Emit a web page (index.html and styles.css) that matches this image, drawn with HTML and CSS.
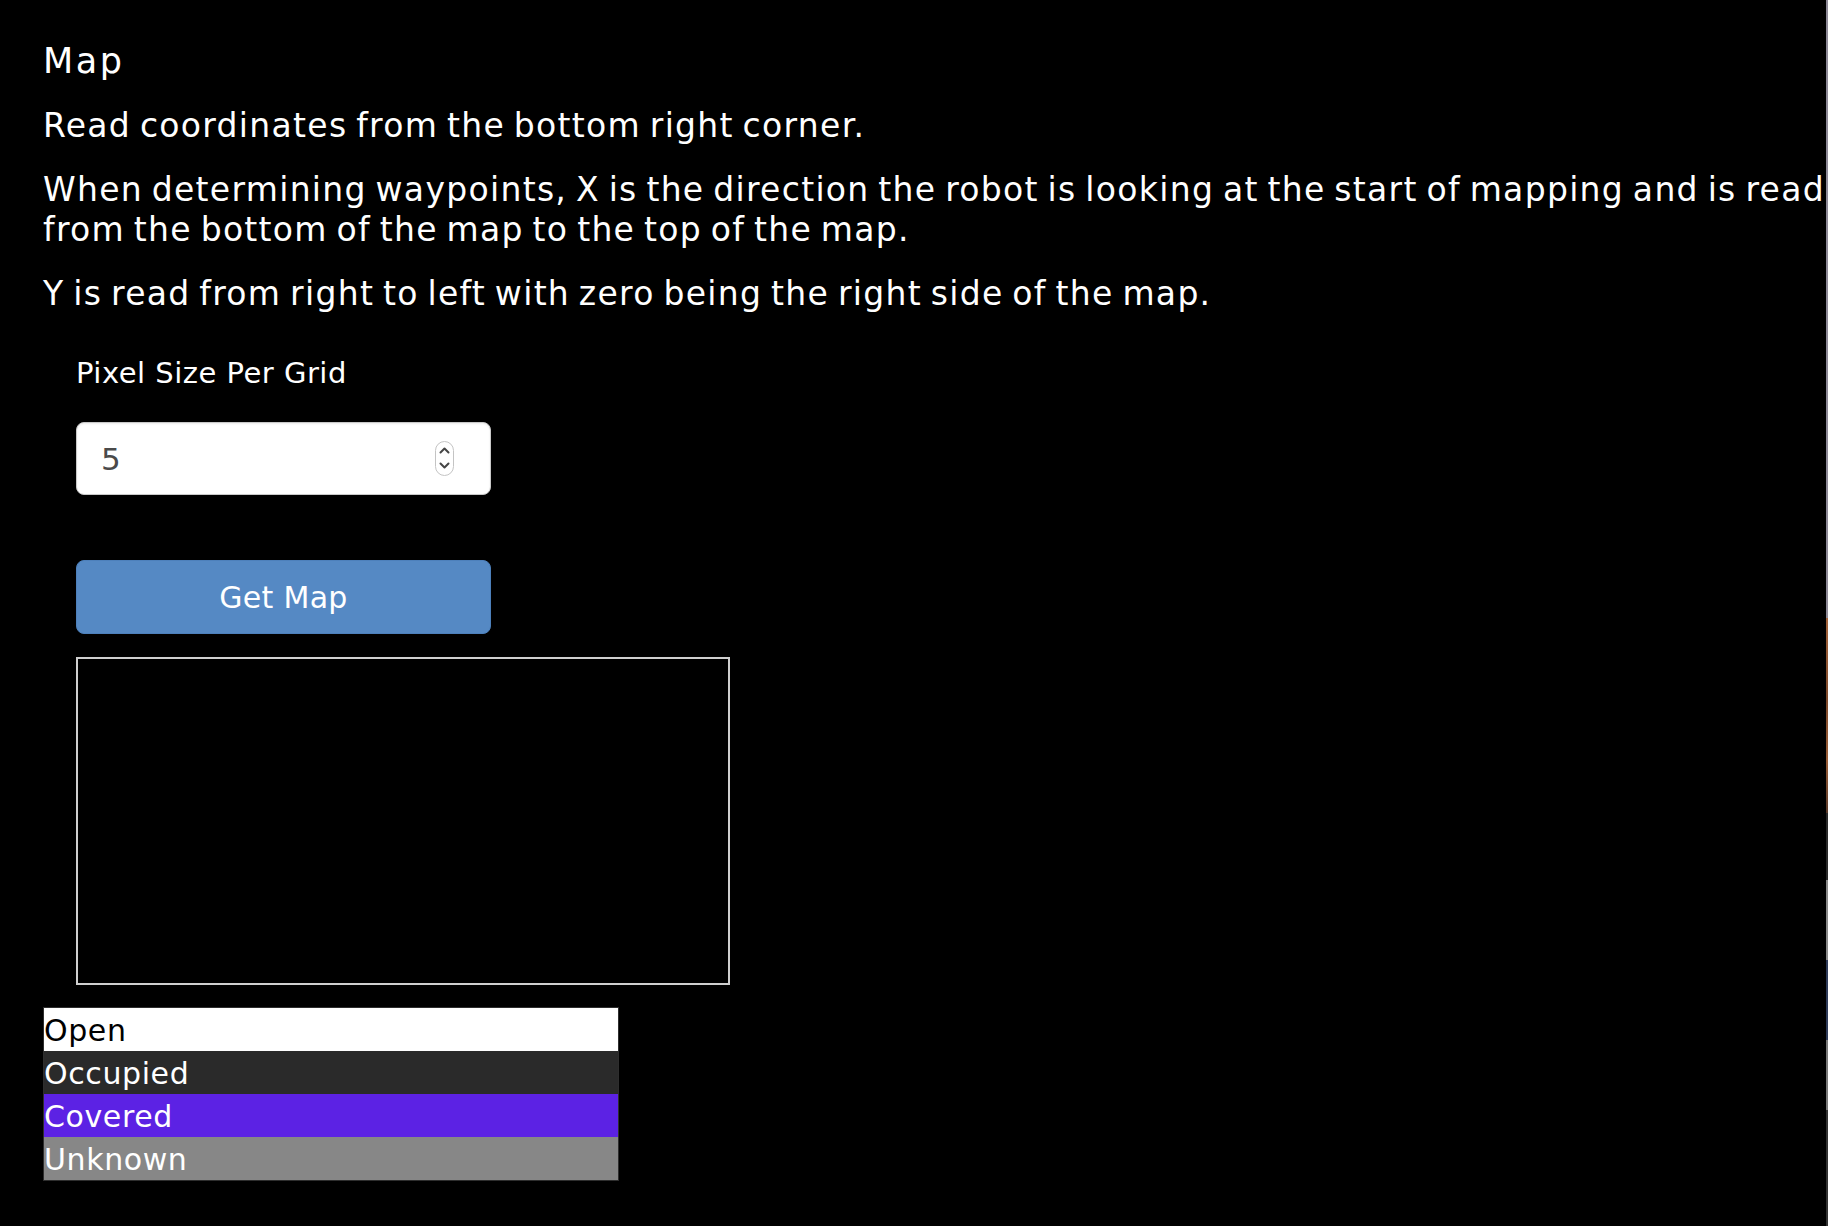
FILE: index.html
```html
<!DOCTYPE html>
<html lang="en">
<head>
<meta charset="utf-8">
<title>Map</title>
<link rel="stylesheet" href="styles.css">
</head>
<body>
<div class="page">
  <h1 class="title">Map</h1>
  <p class="text">Read coordinates from the bottom right corner.</p>
  <p class="text">When determining waypoints, X is the direction the robot is looking at the start of mapping and is read from the bottom of the map to the top of the map.</p>
  <p class="text">Y is read from right to left with zero being the right side of the map.</p>

  <div class="controls">
    <label class="field-label" for="pixel-size">Pixel Size Per Grid</label>
    <div class="number-input">
      <input id="pixel-size" class="number-field" type="text" value="5">
      <svg class="spinner" width="19" height="35" viewBox="0 0 19 35" aria-hidden="true">
        <rect x="0.5" y="0.5" width="18" height="34" rx="9" ry="9" fill="#fff" stroke="#c4c4c4"/>
        <path d="M5.5 11.5 L9.5 7.5 L13.5 11.5" fill="none" stroke="#454545" stroke-width="2" stroke-linecap="round" stroke-linejoin="round"/>
        <path d="M5.5 22.5 L9.5 26.5 L13.5 22.5" fill="none" stroke="#454545" stroke-width="2" stroke-linecap="round" stroke-linejoin="round"/>
      </svg>
    </div>
    <button class="btn" type="button">Get Map</button>
    <div class="map-canvas"></div>
  </div>

  <div class="legend">
    <div class="legend-row legend-open">Open</div>
    <div class="legend-row legend-occupied">Occupied</div>
    <div class="legend-row legend-covered">Covered</div>
    <div class="legend-row legend-unknown">Unknown</div>
  </div>
</div>
<div class="edge-strip"></div>
</body>
</html>
```
FILE: styles.css
```css
html, body {
  margin: 0;
  padding: 0;
  background: #000;
  height: 100%;
  overflow: hidden;
}

body {
  display: flex;
  font-family: "DejaVu Sans", "Liberation Sans", sans-serif;
  color: #fff;
}

.page {
  flex: 1;
  min-width: 0;
  overflow: hidden;
  padding: 41px 0 0 43px;
}

.edge-strip {
  flex: none;
  width: 2px;
  background: linear-gradient(to bottom,
    #8e8a97 0, #8e8a97 618px,
    #a4643c 618px, #7e4a2c 700px, #9a5e38 760px, #5a3a2a 813px,
    #2a2a2a 813px, #2a2a2a 880px,
    #8a8a8a 880px, #8a8a8a 960px,
    #2f3c5a 960px, #2f3c5a 1040px,
    #7a7a7a 1040px, #7a7a7a 1110px,
    #333 1110px, #333 1226px);
}

.title {
  margin: 0 0 25px;
  font-size: 35px;
  font-weight: normal;
  line-height: 40px;
  letter-spacing: 2.5px;
}

.text {
  width: 1810px;
  margin: 0 0 24px;
  font-size: 33px;
  line-height: 40px;
  letter-spacing: 1.3px;
  word-spacing: -3px;
}

.controls {
  margin: 42px 0 0 33px;
  display: flex;
  flex-direction: column;
  align-items: flex-start;
}

.field-label {
  font-size: 29px;
  line-height: 34px;
  letter-spacing: 0.5px;
}

.number-input {
  box-sizing: border-box;
  margin-top: 32px;
  width: 415px;
  height: 73px;
  display: flex;
  align-items: center;
  padding: 0 36px 0 24px;
  background: #fff;
  border: 1px solid #c9c9c9;
  border-radius: 8px;
  box-shadow: inset 0 1px 2px rgba(0, 0, 0, 0.08);
}

.number-field {
  flex: 1;
  min-width: 0;
  border: none;
  outline: none;
  background: transparent;
  padding: 0;
  font-family: "DejaVu Sans", "Liberation Sans", sans-serif;
  font-size: 31px;
  color: #4a4a4a;
}

.spinner {
  flex: none;
  display: block;
}

.btn {
  box-sizing: border-box;
  margin-top: 65px;
  width: 415px;
  height: 74px;
  padding: 0;
  background: #5589c4;
  border: 1px solid #4d80bb;
  border-radius: 8px;
  color: #fff;
  font-family: "DejaVu Sans", "Liberation Sans", sans-serif;
  font-size: 30px;
  letter-spacing: 0.3px;
  cursor: pointer;
}

.map-canvas {
  box-sizing: border-box;
  margin-top: 23px;
  width: 654px;
  height: 328px;
  border: 2px solid #cfcfcf;
  background: #000;
}

.legend {
  box-sizing: border-box;
  margin-top: 22px;
  width: 576px;
  border: 1px solid #2e2e2e;
}

.legend-row {
  box-sizing: border-box;
  height: 43px;
  padding-top: 2px;
  line-height: 41px;
  font-size: 30px;
  letter-spacing: 0.6px;
  white-space: nowrap;
}

.legend-open {
  background: #fff;
  color: #000;
}

.legend-occupied {
  background: #2a2a2a;
  color: #fff;
}

.legend-covered {
  background: #5c22e4;
  color: #fff;
}

.legend-unknown {
  background: #878787;
  color: #fff;
}
```
